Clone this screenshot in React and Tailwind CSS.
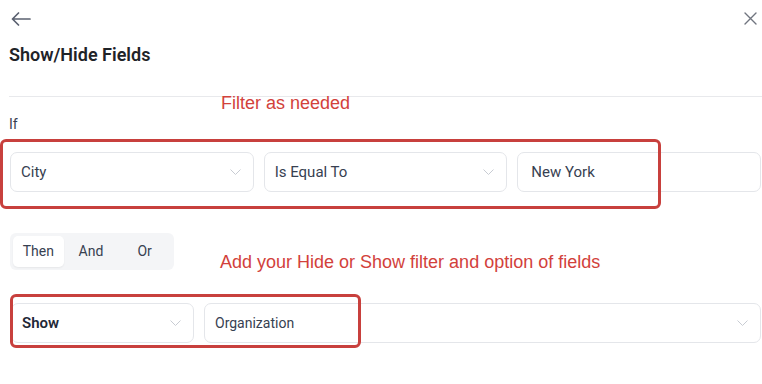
import React from "react";

const Chevron = () => (
  <svg width="11" height="6" viewBox="0 0 11 6" fill="none" className="shrink-0">
    <path d="M0.5 0.5 L5.5 5.5 L10.5 0.5" stroke="#c8ccd3" strokeWidth="1" />
  </svg>
);

const SelectBox = ({ label, bold, small, className = "" }) => (
  <div
    className={`flex items-center justify-between h-[40px] pl-[10px] pr-[12px] rounded-[7px] border border-[#e4e6ea] bg-white ${className}`}
  >
    <span
      className={`${small ? "text-[14px]" : "text-[15px]"} ${bold ? "font-semibold text-[#1f2937]" : "text-[#374151]"}`}
    >
      {label}
    </span>
    <Chevron />
  </div>
);

export default function App() {
  return (
    <div className="relative w-[762px] h-[384px] bg-white overflow-hidden font-['Roboto',sans-serif]">
      {/* Header */}
      <div className="flex items-center justify-between h-[36px] pl-[11px] pr-[5px] pt-[1px]">
        <svg width="20" height="14" viewBox="0 0 20 14" fill="none">
          <path d="M19 7 H1.5 M7.5 1 L1.5 7 L7.5 13" stroke="#5b6170" strokeWidth="1.7" strokeLinecap="round" strokeLinejoin="round" />
        </svg>
        <svg width="13" height="13" viewBox="0 0 13 13" fill="none">
          <path d="M1 1 L12 12 M12 1 L1 12" stroke="#70757f" strokeWidth="1.4" strokeLinecap="round" />
        </svg>
      </div>

      <h1 className="pl-[9px] mt-[8px] text-[18px] leading-[22px] font-semibold text-[#1f2328]">
        Show/Hide Fields
      </h1>

      <div className="ml-[9px] mt-[30px] border-t border-[#e8e9ec]" />

      <div className="pl-[9px] mt-[17px] text-[14px] leading-[20px] text-[#374151]">If</div>

      {/* Condition row */}
      <div className="grid grid-cols-3 gap-[10px] pl-[10px] pr-[1px] mt-[18px]">
        <SelectBox label="City" />
        <SelectBox label="Is Equal To" />
        <div className="flex items-center h-[40px] pl-[13px] rounded-[7px] border border-[#e4e6ea] bg-white">
          <span className="text-[15px] text-[#374151]">New York</span>
        </div>
      </div>

      {/* Segmented control */}
      <div className="ml-[10px] mt-[41px] w-[164px] h-[37px] p-[3px] flex rounded-[6px] bg-[#f4f5f7]">
        <div className="w-[51px] flex items-center justify-center rounded-[5px] bg-white shadow-[0_1px_2px_rgba(0,0,0,0.06)] text-[14px] text-[#374151]">
          Then
        </div>
        <div className="w-[55px] flex items-center justify-center text-[14px] text-[#374151]">And</div>
        <div className="w-[53px] flex items-center justify-center text-[14px] text-[#374151]">Or</div>
      </div>

      {/* Action row */}
      <div className="flex gap-[10px] pl-[11px] pr-[1px] mt-[33px]">
        <SelectBox label="Show" bold className="w-[183px]" />
        <SelectBox label="Organization" small className="flex-1" />
      </div>

      {/* Annotations */}
      <div className="absolute left-[221px] top-[93px] text-[18px] leading-[20px] text-[#d2413b] font-['Liberation_Sans',sans-serif]">
        Filter as needed
      </div>
      <div className="absolute left-[220px] top-[252px] text-[18px] leading-[20px] text-[#d2413b] font-['Liberation_Sans',sans-serif]">
        Add your Hide or Show filter and option of fields
      </div>
      <div className="absolute left-0 top-[139px] w-[661px] h-[70px] border-[3px] border-[#c8403d] rounded-[6px]" />
      <div className="absolute left-[10px] top-[294px] w-[351px] h-[54px] border-[3px] border-[#c8403d] rounded-[6px]" />
    </div>
  );
}
